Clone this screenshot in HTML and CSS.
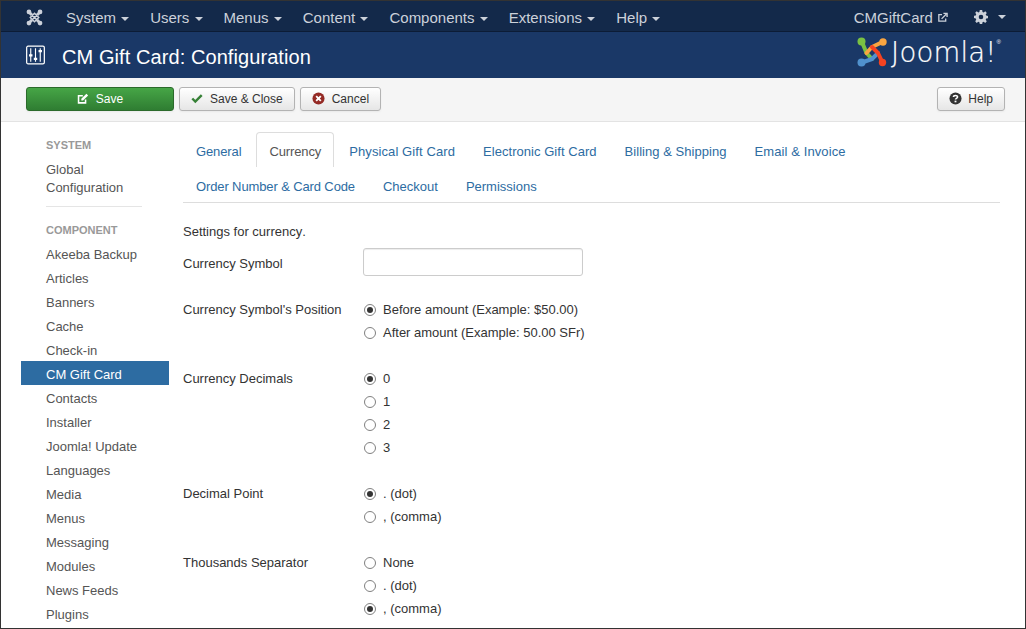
FILE: index.html
```html
<!DOCTYPE html>
<html lang="en">
<head>
    <meta charset="UTF-8">
    <title>CM Gift Card: Configuration</title>
    <link rel="stylesheet" href="styles.css">
</head>
<body>
    <div class="frame">
        <nav class="navbar">
            <svg class="nav-logo" viewBox="0 0 20 20" width="17" height="17">
                <g fill="none" stroke="#ccd1da" stroke-width="3.4">
                    <path d="M4 4 L7 7 M16 4 L13 7 M4 16 L7 13 M16 16 L13 13"/>
                </g>
                <g fill="#ccd1da">
                    <circle cx="3.5" cy="3.5" r="2.8"/><circle cx="16.5" cy="3.5" r="2.8"/>
                    <circle cx="3.5" cy="16.5" r="2.8"/><circle cx="16.5" cy="16.5" r="2.8"/>
                </g>
                <path d="M10 5 L15 10 L10 15 L5 10 Z M6 6 L14 14 M14 6 L6 14" fill="none" stroke="#ccd1da" stroke-width="1.7"/>
            </svg>
            <ul class="menu">
                <li>System <i class="caret"></i></li>
                <li>Users <i class="caret"></i></li>
                <li>Menus <i class="caret"></i></li>
                <li>Content <i class="caret"></i></li>
                <li>Components <i class="caret"></i></li>
                <li>Extensions <i class="caret"></i></li>
                <li>Help <i class="caret"></i></li>
            </ul>
            <div class="nav-right">
                <span class="site-link">CMGiftCard
                    <svg viewBox="0 0 12 12" width="11" height="11"><path d="M9.5 7v3H2V2.8h3.5" fill="none" stroke="#ccd1da" stroke-width="1.4"/><path d="M5 7.5 10 2.5M7 1.5h4v4" fill="none" stroke="#ccd1da" stroke-width="1.5"/></svg>
                </span>
                <span class="gear">
                    <svg viewBox="0 0 14 14" width="14" height="14"><path fill-rule="evenodd" fill="#ccd1da" d="M5.8 0h2.4l.3 1.9 1.2.5L11.3 1.3l1.5 1.6-1.1 1.5.5 1.2 1.8.3v2.3l-1.8.4-.5 1.1 1.1 1.6-1.6 1.6-1.5-1.1-1.2.5-.3 1.8H5.8l-.4-1.8-1.1-.5-1.6 1.1-1.5-1.6 1-1.6-.4-1.1L0 8.1V5.8l1.8-.3.4-1.2-1-1.5 1.5-1.5 1.6 1.1 1.1-.5zM7 4.7a2.3 2.3 0 1 0 0 4.6 2.3 2.3 0 0 0 0-4.6z"/></svg>
                    <i class="caret"></i>
                </span>
            </div>
        </nav>
        <header class="title-bar">
            <svg class="title-icon" viewBox="0 0 20 20" width="19" height="20">
                <rect x="0.7" y="0.7" width="18.6" height="18.6" rx="1.5" fill="none" stroke="#fff" stroke-width="1.3"/>
                <path d="M5 3v14M10 3v14M15 3v14" stroke="#fff" stroke-width="1.2"/>
                <path d="M3.2 10.5h3.6M8.2 14h3.6M13.2 6h3.6" stroke="#fff" stroke-width="2.4"/>
            </svg>
            <h1>CM Gift Card: Configuration</h1>
            <div class="brand">
                <svg viewBox="0 0 30 30" width="30" height="30">
                    <g fill="none" stroke-width="4" stroke-linecap="round" stroke-linejoin="round">
                        <path d="M5 5 L9.5 16 L15 22" stroke="#7ac143"/>
                        <path d="M25.5 5 L15 10 L9.5 16" stroke="#f9a541"/>
                        <path d="M5 25.5 L15 22 L21 16" stroke="#5091cd"/>
                        <path d="M25.5 25.5 L21 16 L15 10" stroke="#f44321"/>
                    </g>
                    <circle cx="4.5" cy="4.5" r="4" fill="#7ac143"/>
                    <circle cx="26" cy="5" r="3.7" fill="#f9a541"/>
                    <circle cx="4.5" cy="25.5" r="4" fill="#5091cd"/>
                    <circle cx="25.5" cy="25.5" r="3.7" fill="#f44321"/>
                </svg>
                <span class="brand-name">Joomla!</span><sup class="reg">®</sup>
            </div>
        </header>
        <div class="toolbar">
            <button class="btn btn-save">
                <svg viewBox="0 0 14 14" width="12" height="12"><path d="M10 7.5v4H1.8V3.2h5" fill="none" stroke="#fff" stroke-width="1.8"/><path d="M5 6.8 11 1l2 2-6 5.8H5z" fill="#fff"/></svg>
                Save
            </button>
            <button class="btn btn-close">
                <svg viewBox="0 0 14 12" width="12" height="11"><path d="M1.5 6 5 9.5 12.5 2" fill="none" stroke="#378137" stroke-width="2.8"/></svg>
                Save &amp; Close
            </button>
            <button class="btn btn-cancel">
                <svg viewBox="0 0 14 14" width="13" height="13"><circle cx="7" cy="7" r="6.5" fill="#942a25"/><path d="M4.5 4.5l5 5M9.5 4.5l-5 5" stroke="#fff" stroke-width="2"/></svg>
                Cancel
            </button>
            <button class="btn btn-help">
                <svg viewBox="0 0 14 14" width="13" height="13"><circle cx="7" cy="7" r="6.5" fill="#333"/><path d="M4.8 5.4C4.9 3.3 9.2 3.2 9.2 5.4 9.2 6.9 7 6.8 7 8.2" fill="none" stroke="#fff" stroke-width="1.7"/><rect x="6" y="9.3" width="2" height="1.8" fill="#fff"/></svg>
                Help
            </button>
        </div>
        <div class="main">
            <aside class="sidebar">
                <h2 class="side-head">System</h2>
                <a class="side-item side-wrap">Global Configuration</a>
                <hr class="side-rule">
                <h2 class="side-head side-head-gap">Component</h2>
                <a class="side-item">Akeeba Backup</a>
                <a class="side-item">Articles</a>
                <a class="side-item">Banners</a>
                <a class="side-item">Cache</a>
                <a class="side-item">Check-in</a>
                <a class="side-item active">CM Gift Card</a>
                <a class="side-item">Contacts</a>
                <a class="side-item">Installer</a>
                <a class="side-item">Joomla! Update</a>
                <a class="side-item">Languages</a>
                <a class="side-item">Media</a>
                <a class="side-item">Menus</a>
                <a class="side-item">Messaging</a>
                <a class="side-item">Modules</a>
                <a class="side-item">News Feeds</a>
                <a class="side-item">Plugins</a>
            </aside>
            <section class="content">
                <ul class="tabs">
                    <li class="tab-narrow">General</li>
                    <li class="current tab-narrow">Currency</li>
                    <li class="tab-wider">Physical Gift Card</li>
                    <li class="tab-wide">Electronic Gift Card</li>
                    <li class="tab-wide">Billing &amp; Shipping</li>
                    <li class="tab-wider row-end">Email &amp; Invoice</li>
                    <li class="tab-narrow">Order Number &amp; Card Code</li>
                    <li>Checkout</li>
                    <li>Permissions</li>
                </ul>
                <p class="intro">Settings for currency.</p>
                <div class="field field-input">
                    <label class="field-label">Currency Symbol</label>
                    <input class="text-input" type="text">
                </div>
                <div class="field">
                    <label class="field-label">Currency Symbol's Position</label>
                    <div class="options">
                        <div class="opt"><i class="radio on"></i>Before amount (Example: $50.00)</div>
                        <div class="opt"><i class="radio"></i>After amount (Example: 50.00 SFr)</div>
                    </div>
                </div>
                <div class="field">
                    <label class="field-label">Currency Decimals</label>
                    <div class="options">
                        <div class="opt"><i class="radio on"></i>0</div>
                        <div class="opt"><i class="radio"></i>1</div>
                        <div class="opt"><i class="radio"></i>2</div>
                        <div class="opt"><i class="radio"></i>3</div>
                    </div>
                </div>
                <div class="field">
                    <label class="field-label">Decimal Point</label>
                    <div class="options">
                        <div class="opt"><i class="radio on"></i>. (dot)</div>
                        <div class="opt"><i class="radio"></i>, (comma)</div>
                    </div>
                </div>
                <div class="field">
                    <label class="field-label">Thousands Separator</label>
                    <div class="options">
                        <div class="opt"><i class="radio"></i>None</div>
                        <div class="opt"><i class="radio"></i>. (dot)</div>
                        <div class="opt"><i class="radio on"></i>, (comma)</div>
                    </div>
                </div>
            </section>
        </div>
    </div>
</body>
</html>
```

FILE: styles.css
```css
* {
    box-sizing: border-box;
}
html, body {
    margin: 0;
    padding: 0;
    height: 100%;
    overflow: hidden;
}
body {
    font-family: "Liberation Sans", Arial, sans-serif;
    font-size: 13px;
    font-kerning: none;
    color: #333;
    background: #fff;
}
.frame {
    width: 1026px;
    height: 629px;
    border: 1px solid #333;
    overflow: hidden;
    display: flex;
    flex-direction: column;
}
.navbar {
    height: 31px;
    flex: none;
    display: flex;
    align-items: center;
    background: #13294a;
    border-bottom: 1px solid #0c1c36;
    padding: 2px 0 0 25px;
    color: #ccd1da;
    font-size: 15px;
}
.nav-logo {
    flex: none;
}
.menu {
    display: flex;
    list-style: none;
    margin: 0 0 0 23px;
    padding: 0;
    gap: 21px;
}
.caret {
    display: inline-block;
    width: 0;
    height: 0;
    margin-left: 1px;
    vertical-align: middle;
    border-left: 4px solid transparent;
    border-right: 4px solid transparent;
    border-top: 4px solid #ccd1da;
}
.nav-right {
    margin-left: auto;
    display: flex;
    align-items: center;
    gap: 26px;
    padding-right: 19px;
}
.gear {
    display: flex;
    align-items: center;
    gap: 9px;
}
.title-bar {
    height: 46px;
    flex: none;
    display: flex;
    align-items: center;
    background: #1a3867;
    padding: 0 25px;
    color: #fff;
}
.title-icon {
    flex: none;
}
.title-bar h1 {
    margin: 4px 0 0 17px;
    font-size: 20px;
    font-weight: normal;
    letter-spacing: 0.08px;
}
.brand {
    margin-left: auto;
    margin-right: -1px;
    display: flex;
    align-items: center;
    margin-top: -6px;
}
.brand-name {
    font-family: "DejaVu Sans", sans-serif;
    font-size: 27.5px;
    font-weight: 200;
    letter-spacing: 0.2px;
    margin-left: 4px;
    -webkit-text-stroke: 0.2px #fff;
}
.reg {
    font-size: 6px;
    align-self: flex-start;
    margin-top: 3px;
}
.toolbar {
    height: 44px;
    flex: none;
    display: flex;
    align-items: center;
    gap: 5px;
    padding: 0 20px 2px 25px;
    background: #f5f5f5;
    border-bottom: 1px solid #e3e3e3;
}
.btn {
    height: 24px;
    display: flex;
    align-items: center;
    justify-content: center;
    gap: 7px;
    padding: 0 11px;
    font-family: inherit;
    font-size: 12px;
    color: #333;
    background: linear-gradient(#fff, #e6e6e6);
    border: 1px solid #b3b3b3;
    border-radius: 3px;
    box-shadow: 0 1px 2px rgba(0, 0, 0, 0.05);
}
.btn-save {
    width: 148px;
    color: #fff;
    background: linear-gradient(#46a546, #2f7d32);
    border-color: #2b6a2b;
}
.btn-help {
    margin-left: auto;
    gap: 6px;
}
.main {
    flex: 1;
    display: flex;
    min-height: 0;
}
.sidebar {
    width: 148px;
    flex: none;
    margin-left: 20px;
    padding-top: 14px;
}
.side-head {
    margin: 0;
    padding-left: 25px;
    font-size: 11px;
    line-height: 18px;
    font-weight: bold;
    text-transform: uppercase;
    color: #999;
}
.side-head-gap {
    margin-bottom: 2px;
}
.side-item {
    display: block;
    height: 24px;
    padding: 0 10px 0 25px;
    line-height: 28px;
    color: #555;
}
.side-wrap {
    height: auto;
    line-height: 18px;
    padding-top: 7px;
    padding-right: 30px;
}
.side-item.active {
    background: #2d6ca2;
    color: #fff;
}
.side-rule {
    margin: 9px 27px 14px 25px;
    border: 0;
    border-top: 1px solid #e5e5e5;
}
.content {
    flex: 1;
    margin-left: 14px;
    margin-right: 25px;
    padding-top: 10px;
}
.tabs {
    display: flex;
    flex-wrap: wrap;
    list-style: none;
    margin: 0;
    padding: 0;
    border-bottom: 1px solid #ddd;
    height: 71px;
    align-content: flex-start;
}
.tabs li {
    height: 35px;
    padding: 0 13px;
    margin-right: 2px;
    line-height: 39px;
    color: #2d6ca2;
    white-space: nowrap;
}
.tabs li.current {
    padding: 0 12px;
    color: #555;
    border: 1px solid #ddd;
    border-bottom: 0;
    border-radius: 4px 4px 0 0;
    line-height: 37px;
    background: #fff;
}
.tabs li.tab-narrow {
    letter-spacing: -0.12px;
}
.tabs li.tab-wide {
    letter-spacing: 0.04px;
}
.tabs li.tab-wider {
    letter-spacing: 0.1px;
}
.tabs li.row-end {
    margin-right: 100px;
}
.intro {
    margin: 0;
    padding-top: 20px;
    line-height: 18px;
}
.field {
    display: flex;
    margin-bottom: 23px;
}
.field-label {
    width: 180px;
    flex: none;
    line-height: 23px;
}
.field-input {
    margin-top: 7px;
    margin-bottom: 19px;
}
.field-input .field-label {
    line-height: 31px;
}
.text-input {
    width: 220px;
    height: 28px;
    border: 1px solid #ccc;
    border-radius: 3px;
    background: #fff;
    box-shadow: inset 0 1px 1px rgba(0, 0, 0, 0.075);
}
.opt {
    display: flex;
    align-items: center;
    height: 23px;
}
.radio {
    width: 12px;
    height: 12px;
    margin: 0 7px 0 1px;
    border: 1px solid #808080;
    border-radius: 50%;
    background: #fff;
    display: flex;
    align-items: center;
    justify-content: center;
}
.radio.on::after {
    content: "";
    width: 6px;
    height: 6px;
    border-radius: 50%;
    background: #333;
}
```
